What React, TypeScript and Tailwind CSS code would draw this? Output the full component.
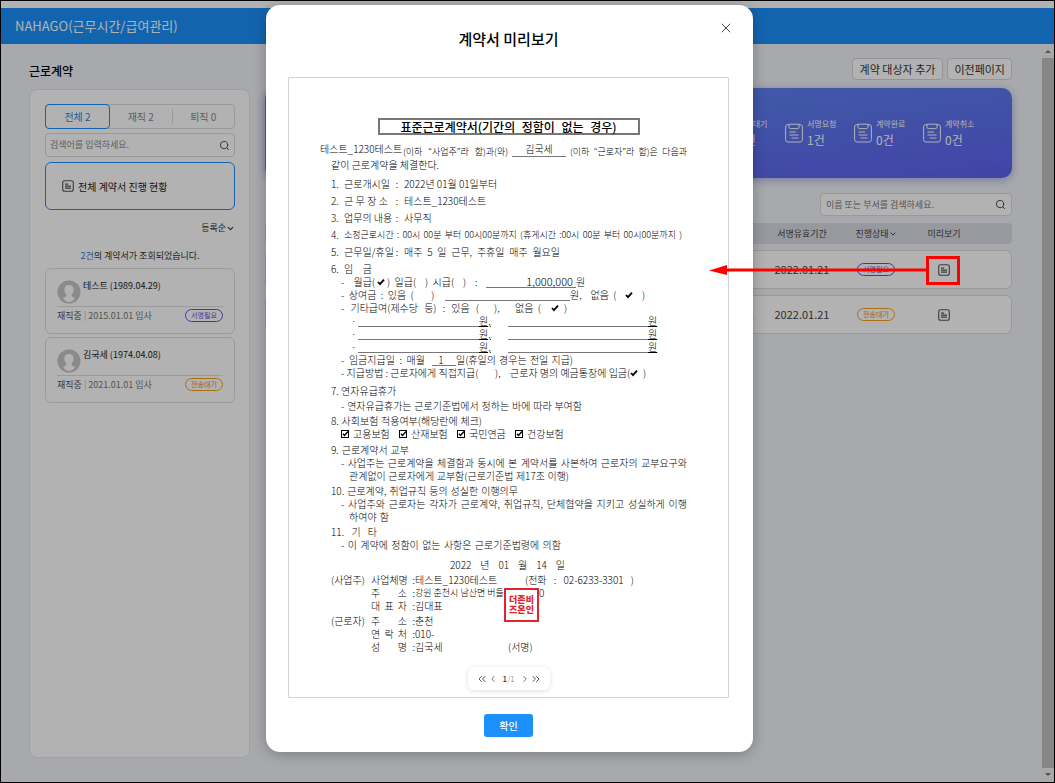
import type { ReactNode } from "react";
import { ChevronDown, ChevronLeft, ChevronRight, ChevronsLeft, ChevronsRight, Search, X } from "lucide-react";

const FONT = "font-['Noto_Sans_CJK_KR','Noto_Sans',sans-serif]";

function DocIcon({ className = "" }: { className?: string }) {
  return (
    <svg viewBox="0 0 12 12" className={`size-3 shrink-0 ${className}`} fill="none" stroke="currentColor" aria-hidden="true">
      <rect x="0.7" y="0.7" width="10.6" height="10.6" rx="2" strokeWidth="1.1" />
      <path d="M3 4.2h3.2M3 6.2h6M3 8.2h6" strokeWidth="1.3" />
    </svg>
  );
}

function ClipboardIcon() {
  return (
    <svg viewBox="0 0 18 20" className="h-5 w-[18px] shrink-0" fill="none" stroke="currentColor" strokeWidth="1" aria-hidden="true">
      <path d="M4 1.6H3a2.4 2.4 0 0 0-2.4 2.4v12.6A2.4 2.4 0 0 0 3 19h12a2.4 2.4 0 0 0 2.4-2.4V4A2.4 2.4 0 0 0 15 1.6h-1" />
      <path d="M4 1.2h10v3a1.4 1.4 0 0 1-1.4 1.4H5.4A1.4 1.4 0 0 1 4 4.2z" />
      <path d="M4.5 9h6.5M4.5 12h9M6.5 15h7" />
    </svg>
  );
}

function Avatar() {
  return (
    <svg viewBox="0 0 24 24" className="size-6 shrink-0" aria-hidden="true">
      <circle cx="12" cy="12" r="11.5" fill="#c6c6c6" />
      <path d="M12 5c3 0 4.6 2 4.6 4.8 0 2-.8 3.6-2 4.7-.2 1.8.5 2.5 3.4 3.5-1.5 2.5-3.5 4-6 4s-4.5-1.5-6-4c2.9-1 3.6-1.7 3.4-3.5-1.2-1.1-2-2.7-2-4.7C7.4 7 9 5 12 5z" fill="#fff" />
    </svg>
  );
}

function Badge({ kind }: { kind: "sign" | "send" }) {
  const tone = kind === "sign" ? "border-[#6a4fe0] text-[#6a4fe0]" : "border-[#f5a11c] text-[#f08a1c]";
  return (
    <span className={`inline-flex h-[13px] w-[38px] items-center justify-center rounded-full border text-[7px] leading-none ${tone}`}>
      {kind === "sign" ? "서명필요" : "전송대기"}
    </span>
  );
}

function PersonCard({ name, joined, kind }: { name: string; joined: string; kind: "sign" | "send" }) {
  return (
    <li className="h-[66px] rounded-md border border-[#e0e0e0] px-[11px] pt-[11px]">
      <div className="flex gap-[2px] border-b border-[#dedede] pb-[2px]">
        <Avatar />
        <span className="text-[9px] leading-[12px] text-[#222]">{name}</span>
      </div>
      <div className="flex items-center justify-between pt-[2px]">
        <span className="text-[9px] leading-[12px] text-[#777]">
          <span className="text-[#555]">재직중</span> <span className="text-[#bbb]">|</span> {joined}
        </span>
        <Badge kind={kind} />
      </div>
    </li>
  );
}

function SidePanel() {
  return (
    <aside className="w-[221px] shrink-0">
      <h1 className="h-[45px] pt-[18px] text-[12px] leading-[18px] font-medium text-black">근로계약</h1>
      <div className="h-[669px] rounded-lg border border-[#e4e6ea] bg-white pt-[14px] pr-[14px] pl-[15px]">
        <div className="flex h-[25px] rounded-sm border border-[#ddd] text-[10px] text-[#888]">
          <button className="-my-px -ml-px w-[65px] rounded-sm border border-[#1c90fb] text-[#2e7be0]">전체 2</button>
          <button className="my-1 flex-1 border-r border-[#ddd]">재직 2</button>
          <button className="flex-1">퇴직 0</button>
        </div>
        <label className="mt-[4px] flex h-[24px] items-center rounded-sm border border-[#ddd] px-1">
          <input aria-label="검색어" placeholder="검색어를 입력하세요." className="min-w-0 flex-1 bg-transparent text-[9px] outline-none placeholder:text-[#888]" />
          <Search className="size-[11px] text-[#444]" />
        </label>
        <button className="mt-[5px] flex h-[48px] w-full items-center gap-1 rounded-md border border-[#1c90fb] pl-4 text-[10px] text-[#222]">
          <DocIcon className="text-[#555]" />
          전체 계약서 진행 현황
        </button>
        <button className="mt-[10px] ml-auto flex h-4 items-center text-[9px] text-[#333]">
          등록순
          <ChevronDown className="size-[9px]" strokeWidth={3} />
        </button>
        <p className="mt-[13px] text-center text-[9px] leading-[14px] text-[#333]">
          <span className="text-[#2e7be0]">2건</span>의 계약서가 조회되었습니다.
        </p>
        <ul className="mt-[5px] flex flex-col gap-[3px]">
          <PersonCard name="테스트 (1989.04.29)" joined="2015.01.01 입사" kind="sign" />
          <PersonCard name="김국세 (1974.04.08)" joined="2021.01.01 입사" kind="send" />
        </ul>
      </div>
    </aside>
  );
}

const STATS = [
  { label: "전송대기", value: "1건" },
  { label: "서명요청", value: "1건" },
  { label: "계약완료", value: "0건" },
  { label: "계약취소", value: "0건" },
];

function MainPanel() {
  return (
    <section className="min-w-0 flex-1">
      <div className="flex h-[44px] items-start justify-end gap-1 pt-[14px]">
        <button className="h-[22px] rounded-sm border border-[#d5d5d5] bg-white px-[7px] text-[11px] leading-none text-[#333]">계약 대상자 추가</button>
        <button className="h-[22px] rounded-sm border border-[#d5d5d5] bg-white px-[6px] text-[11px] leading-none text-[#333]">이전페이지</button>
      </div>
      <div className="flex h-[90px] items-center justify-end rounded-[10px] bg-linear-to-br from-[#5b8df2] to-[#5e62ee] pr-[20px] text-white shadow-[0_2px_8px_#a4aede]">
        {STATS.map((s) => (
          <div key={s.label} className="flex w-[69px] items-center gap-[4px]">
            <ClipboardIcon />
            <div>
              <div className="text-[8px] leading-[14px]">{s.label}</div>
              <div className="text-[12px] leading-[18px]">{s.value}</div>
            </div>
          </div>
        ))}
      </div>
      <label className="mt-[15px] ml-auto flex h-[23px] w-[192px] items-center rounded-sm border border-[#dcdcdc] bg-white px-[5px]">
        <input aria-label="이름 또는 부서" placeholder="이름 또는 부서를 검색하세요." className="min-w-0 flex-1 bg-transparent text-[9px] outline-none placeholder:text-[#777]" />
        <Search className="size-[11px] text-[#444]" />
      </label>
      <table className="mt-[1px] w-full table-fixed border-separate border-spacing-x-0 border-spacing-y-[6px] text-center text-[#444]">
        <colgroup>
          <col />
          <col className="w-[74px]" />
          <col className="w-[74px]" />
          <col className="w-[62px]" />
          <col className="w-[37px]" />
        </colgroup>
        <thead>
          <tr className="h-[21px] bg-[#dadce4] text-[9px]">
            <th className="rounded-l-sm" />
            <th className="font-normal">서명유효기간</th>
            <th className="font-normal">
              <button className="inline-flex items-center">
                진행상태
                <ChevronDown className="size-2" strokeWidth={3} />
              </button>
            </th>
            <th className="font-normal">미리보기</th>
            <th className="rounded-r-sm" />
          </tr>
        </thead>
        <tbody>
          {(["sign", "send"] as const).map((kind) => (
            <tr key={kind} className="h-[39px] bg-white text-[11px] *:border-y *:border-[#dcdcdc]">
              <td className="rounded-l-md border-l pr-[11px] text-right">2022.01.21</td>
              <td>2022.01.21</td>
              <td>
                <span className="flex justify-center">
                  <Badge kind={kind} />
                </span>
              </td>
              <td>
                <button aria-label="미리보기" className="flex w-full justify-center text-[#555]">
                  <DocIcon />
                </button>
              </td>
              <td className="rounded-r-md border-r" />
            </tr>
          ))}
        </tbody>
      </table>
    </section>
  );
}

function Row({ children, className = "" }: { children: ReactNode; className?: string }) {
  return <div className={`flex h-[13px] ${className}`}>{children}</div>;
}

function Spread({ children, w }: { children: ReactNode; w: string }) {
  return <span className={`shrink-0 [text-align-last:justify] ${w}`}>{children}</span>;
}

function Tick() {
  return (
    <svg viewBox="0 0 8 8" className="mt-[3px] size-2 shrink-0" fill="none" stroke="#000" strokeWidth="1.8" aria-label="선택">
      <path d="M1 4l2 2.2L7 1.6" />
    </svg>
  );
}

function Term({ no, label, children }: { no: string; label: string; children: ReactNode }) {
  return (
    <Row>
      <span className="w-[13px]">{no}</span>
      <Spread w="w-[44px]">{label}</Spread>
      <span className="w-[16px] pl-[2px] text-center">:</span>
      {children}
    </Row>
  );
}

function BlankAmounts() {
  return (
    <Row className="pl-[20px]">
      <span className="w-[7px]">·</span>
      <span className="w-[121px] border-b border-[#777]" />
      <span className="w-[29px] underline">원,</span>
      <span className="w-[140px] border-b border-[#777]" />
      <span className="underline">원</span>
    </Row>
  );
}

function Insured({ children }: { children: ReactNode }) {
  return (
    <span className="flex w-[58px] gap-[4px]">
      <svg viewBox="0 0 8 8" className="mt-[3px] size-2 shrink-0" fill="none" stroke="#000" aria-hidden="true">
        <rect x="0.5" y="0.5" width="7" height="7" />
        <path d="M2 3.8l1.5 1.7L7 1.5" strokeWidth="1.4" />
      </svg>
      {children}
    </span>
  );
}

function Party({ who = "", label, children }: { who?: string; label: string; children: ReactNode }) {
  return (
    <Row>
      <span className="w-[40px]">{who}</span>
      <Spread w="w-[36px]">{label}</Spread>
      <span className="w-[8px] text-right">:</span>
      {children}
    </Row>
  );
}

function Contract() {
  return (
    <article className="rounded-[1px] border border-[#cfd2d8] pt-[40px] pb-[7px] text-[10px] leading-[13px] font-light whitespace-nowrap text-black">
      <h3 className="mx-auto flex h-[17px] w-[262px] items-center justify-center border-2 border-[#777] text-[12px] leading-none font-medium text-black">
        <Spread w="w-[216px]">표준근로계약서(기간의 정함이 없는 경우)</Spread>
      </h3>
      <div className="mt-[7px] flex h-[16px] pl-[31px]">
        <span className="w-[83px] shrink-0">테스트_1230테스트</span>
        <span className="flex pt-[3px] text-[9px]">
          <Spread w="w-[105px]">(이하 “사업주”라 함)과(와)</Spread>
        </span>
        <span className="mx-[4px] h-[15px] w-[54px] border-b border-[#777] text-center">김국세</span>
        <span className="flex pt-[3px] text-[9px]">
          <Spread w="w-[117px]">(이하 “근로자”라 함)은 다음과</Spread>
        </span>
      </div>
      <div className="pl-[42px]">
        <p className="flex">
          <Spread w="w-[108px]">같이 근로계약을 체결한다.</Spread>
        </p>
        <div className="mt-[6px] flex flex-col gap-[4px]">
          <Term no="1." label="근로개시일">2022년 01월 01일부터</Term>
          <Term no="2." label="근 무 장 소">테스트_1230테스트</Term>
          <Term no="3." label="업무의 내용">사무직</Term>
          <Row>
            <span className="w-[13px]">4.</span>
            <span className="flex text-[9px]">
              <Spread w="w-[338px]">소정근로시간 : 00시 00분 부터 00시00분까지 (휴게시간 :00시 00분 부터 00시00분까지 )</Spread>
            </span>
          </Row>
          <Term no="5." label="근무일/휴일">
            <Spread w="w-[156px]">매주 5 일 근무, 주휴일 매주 월요일</Spread>
          </Term>
          <Row>
            <span className="w-[13px]">6.</span>
            <Spread w="w-[28px]">임 금</Spread>
          </Row>
        </div>
        <div className="pl-[10px]">
          <Row>
            <Spread w="w-[34px]">- 월급(</Spread>
            <span className="mx-[2px] flex"><Tick /></span>
            <span className="w-[99px] whitespace-pre">)  일급(    )  시급(    )    :</span>
            <span className="w-[90px] border-b border-[#777] pr-[3px] text-right text-[11px] leading-[12px]">1,000,000</span>
            <span>원</span>
          </Row>
          <Row>
            <span className="w-[104px] whitespace-pre">-  상여금  :  있음  (        )</span>
            <span className="w-[125px] border-b border-[#777]" />
            <span className="w-[52px] whitespace-pre">원,    없음  (</span>
            <span className="mr-[9px] ml-[3px] flex"><Tick /></span>)
          </Row>
          <Row>
            <Spread w="w-[138px]">- 기타급여(제수당 등) : 있음 (</Spread>
            <span className="w-[36px] pl-[15px]">),</span>
            <span className="w-[32px] whitespace-pre">없음  (</span>
            <span className="mr-[5px] ml-[4px] flex"><Tick /></span>)
          </Row>
          <div className="-ml-[10px]">
            <BlankAmounts />
            <BlankAmounts />
            <BlankAmounts />
          </div>
          <Row>
            <Spread w="w-[84px]">- 임금지급일 : 매월</Spread>
            <span className="ml-[7px] w-[24px] border-b border-[#777] pr-[6px] text-center">1</span>
            <Spread w="w-[117px]">일(휴일의 경우는 전일 지급)</Spread>
          </Row>
          <Row>
            <Spread w="w-[136px]">- 지급방법 : 근로자에게 직접지급(</Spread>
            <span className="w-[33px] pl-[18px]">),</span>
            <Spread w="w-[116px]">근로자 명의 예금통장에 입금(</Spread>
            <span className="mr-[5px] ml-[4px] flex"><Tick /></span>)
          </Row>
        </div>
        <Row className="mt-[5px]">7. 연자유급휴가</Row>
        <Row className="mt-[2px] pl-[10px]">
          <Spread w="w-[241px]">- 연자유급휴가는 근로기준법에서 정하는 바에 따라 부여함</Spread>
        </Row>
        <Row className="mt-[2px]">
          <Spread w="w-[151px]">8. 사회보험 적용여부(해당란에 체크)</Spread>
        </Row>
        <Row className="pl-[10px]">
          <Insured>고용보험</Insured>
          <Insured>산재보험</Insured>
          <Insured>국민연금</Insured>
          <Insured>건강보험</Insured>
        </Row>
        <Row className="mt-[3px]">
          <Spread w="w-[78px]">9. 근로계약서 교부</Spread>
        </Row>
        <Row className="pl-[10px]">
          <Spread w="w-[346px]">- 사업주는 근로계약을 체결함과 동시에 본 계약서를 사본하여 근로자의 교부요구와</Spread>
        </Row>
        <Row className="pl-[18px]">
          <Spread w="w-[220px]">관계없이 근로자에게 교부함(근로기준법 제17조 이행)</Spread>
        </Row>
        <Row className="mt-[2px]">
          <Spread w="w-[187px]">10. 근로계약, 취업규칙 등의 성실한 이행의무</Spread>
        </Row>
        <Row className="pl-[10px]">
          <Spread w="w-[346px]">- 사업주와 근로자는 각자가 근로계약, 취업규칙, 단체협약을 지키고 성실하게 이행</Spread>
        </Row>
        <Row className="pl-[18px]">
          <Spread w="w-[40px]">하여야 함</Spread>
        </Row>
        <Row className="mt-[2px]">
          <Spread w="w-[46px]">11. 기 타</Spread>
        </Row>
        <Row className="pl-[10px]">
          <Spread w="w-[220px]">- 이 계약에 정함이 없는 사항은 근로기준법령에 의함</Spread>
        </Row>
        <Row className="mt-[7px] pl-[119px]">
          <Spread w="w-[115px]">2022 년 01 월 14 일</Spread>
        </Row>
        <div className="mt-[2px]">
          <Party who="(사업주)" label="사업체명">
            <span className="w-[110px]">테스트_1230테스트</span>
            <Spread w="w-[109px]">(전화 : 02-6233-3301 )</Spread>
          </Party>
          <div className="relative">
            <Party label="주 소">
              <span className="w-[124px] text-[9px]">강원 춘천시 남산면 버들</span>
              <span>0</span>
            </Party>
            <div className="absolute top-[2px] left-[173px] flex h-[34px] w-[35px] items-center justify-center border-2 border-[#e0242c] bg-white text-[9px] leading-[10px] font-black text-[#e0242c]">
              <p>
                더존비
                <br />
                즈온인
              </p>
            </div>
          </div>
          <Party label="대 표 자">김대표</Party>
        </div>
        <div className="mt-[2px]">
          <Party who="(근로자)" label="주 소">춘천</Party>
          <Party label="연 락 처">010-</Party>
          <Party label="성 명">
            <span className="w-[93px]">김국세</span>
            <span>(서명)</span>
          </Party>
        </div>
      </div>
      <nav aria-label="쪽 이동" className="mx-auto mt-[14px] flex h-[23px] w-[82px] items-center justify-center rounded-md bg-white text-[#555] shadow-[0_1px_5px_#0002]">
        <button aria-label="첫 쪽"><ChevronsLeft className="size-3" strokeWidth={2} /></button>
        <button aria-label="이전 쪽"><ChevronLeft className="size-[10px]" strokeWidth={2} /></button>
        <span className="mx-[5px] text-[8px] text-[#777]"><b className="font-medium text-[#333]">1</b>/1</span>
        <button aria-label="다음 쪽"><ChevronRight className="size-[10px]" strokeWidth={2} /></button>
        <button aria-label="마지막 쪽"><ChevronsRight className="size-3" strokeWidth={2} /></button>
      </nav>
    </article>
  );
}

function PreviewDialog() {
  return (
    <div role="dialog" aria-label="계약서 미리보기" className="relative w-[487px] rounded-[14px] bg-white pt-[24px] pr-[24px] pb-[15px] pl-[22px] shadow-[0_2px_14px_#0004]">
      <h2 className="text-center text-[15px] leading-[20px] font-medium text-black">계약서 미리보기</h2>
      <button aria-label="닫기" className="absolute top-[15px] right-[19px]">
        <X className="size-4 text-[#444]" strokeWidth={1.5} />
      </button>
      <div className="mt-[28px]">
        <Contract />
      </div>
      <button className="mx-auto mt-[16px] block h-[23px] w-[49px] rounded-[3px] bg-[#1c90fb] text-[10px] leading-none font-medium text-white">확인</button>
    </div>
  );
}

export default function App() {
  return (
    <div className={`relative min-h-screen overflow-hidden border border-black bg-[#f0f2f7] ${FONT}`}>
      <div className="h-[7px] bg-white" />
      <header className="flex h-[36px] items-center bg-[#1c90fb] px-[14px] text-[13px] text-white">NAHAGO(근무시간/급여관리)</header>
      <div className="flex">
        <main className="flex min-w-0 flex-1 gap-[15px] pr-[30px] pl-[28px]">
          <SidePanel />
          <MainPanel />
        </main>
        <div className="flex h-[738px] w-[12px] shrink-0 flex-col bg-[#f1f1f1]" aria-hidden="true">
          <svg viewBox="0 0 12 14" className="h-[14px] w-full"><path d="M3 9l3-3 3 3z" fill="#777" /></svg>
          <div className="flex-1 bg-[#c1c1c1]" />
          <svg viewBox="0 0 12 14" className="h-[14px] w-full"><path d="M3 5l3 3 3-3z" fill="#777" /></svg>
        </div>
      </div>
      <div className="absolute inset-0 flex items-start justify-center bg-black/30 pt-[4px] pr-[36px]">
        <PreviewDialog />
      </div>
      <svg viewBox="0 0 251 29" className="absolute top-[255px] right-[94px] h-[29px] w-[251px]" aria-hidden="true">
        <path d="M17 14h202" stroke="#f00" strokeWidth="3" />
        <path d="M0 14.5L18 9v10z" fill="#f00" />
        <rect x="218.5" y="1.5" width="31" height="26" fill="none" stroke="#f00" strokeWidth="3" />
      </svg>
    </div>
  );
}
